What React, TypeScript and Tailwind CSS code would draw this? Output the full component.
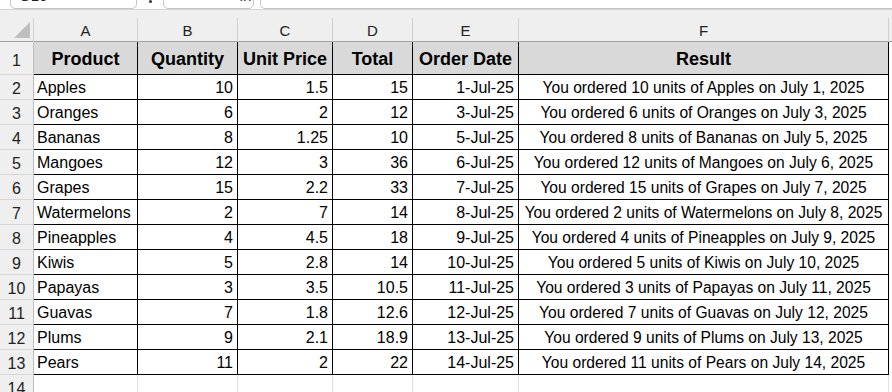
import React from "react";

type Row = {
  product: string;
  qty: number;
  price: string;
  total: string;
  date: string;
  result: string;
};

const rows: Row[] = [
  { product: "Apples", qty: 10, price: "1.5", total: "15", date: "1-Jul-25", result: "You ordered 10 units of Apples on July 1, 2025" },
  { product: "Oranges", qty: 6, price: "2", total: "12", date: "3-Jul-25", result: "You ordered 6 units of Oranges on July 3, 2025" },
  { product: "Bananas", qty: 8, price: "1.25", total: "10", date: "5-Jul-25", result: "You ordered 8 units of Bananas on July 5, 2025" },
  { product: "Mangoes", qty: 12, price: "3", total: "36", date: "6-Jul-25", result: "You ordered 12 units of Mangoes on July 6, 2025" },
  { product: "Grapes", qty: 15, price: "2.2", total: "33", date: "7-Jul-25", result: "You ordered 15 units of Grapes on July 7, 2025" },
  { product: "Watermelons", qty: 2, price: "7", total: "14", date: "8-Jul-25", result: "You ordered 2 units of Watermelons on July 8, 2025" },
  { product: "Pineapples", qty: 4, price: "4.5", total: "18", date: "9-Jul-25", result: "You ordered 4 units of Pineapples on July 9, 2025" },
  { product: "Kiwis", qty: 5, price: "2.8", total: "14", date: "10-Jul-25", result: "You ordered 5 units of Kiwis on July 10, 2025" },
  { product: "Papayas", qty: 3, price: "3.5", total: "10.5", date: "11-Jul-25", result: "You ordered 3 units of Papayas on July 11, 2025" },
  { product: "Guavas", qty: 7, price: "1.8", total: "12.6", date: "12-Jul-25", result: "You ordered 7 units of Guavas on July 12, 2025" },
  { product: "Plums", qty: 9, price: "2.1", total: "18.9", date: "13-Jul-25", result: "You ordered 9 units of Plums on July 13, 2025" },
  { product: "Pears", qty: 11, price: "2", total: "22", date: "14-Jul-25", result: "You ordered 11 units of Pears on July 14, 2025" },
];

const cols = "grid grid-cols-[34px_104px_100px_95px_80px_106px_370px_1fr]";
const letters = ["A", "B", "C", "D", "E", "F"];
const headers = ["Product", "Quantity", "Unit Price", "Total", "Order Date", "Result"];

const cell = "h-[25px] border-r border-b border-black flex items-end pb-[2px] leading-[18px] text-black whitespace-nowrap overflow-hidden";
const num = `${cell} text-[16px] justify-end pr-[4px]`;
const rowHead = "h-[25px] bg-[#efefef] border-r border-b border-r-[#bdbdbd] border-b-[#d6d6d6] flex items-end justify-center pb-[1px] leading-[18px] text-[16px] text-[#222]";

const FormulaBar = () => (
  <div className="h-[10px] bg-white border-b border-[#d4d4d4] overflow-hidden">
    <div className="flex items-start -mt-[20px] h-[29px]">
      <div className="ml-[10px] w-[127px] h-[29px] border border-[#c6c6c6] rounded-[5px] flex items-end pb-[5px] pl-[8px] leading-[15px] text-[15px] text-[#222]">
        G16
      </div>
      <div className="w-[26px] h-[29px] flex items-end justify-center pb-[6px]">
        <span className="w-[3px] h-[3px] rounded-full bg-[#333]" />
      </div>
      <div className="w-[91px] h-[29px] border border-[#c6c6c6] rounded-[5px] flex items-end pb-[5px] pl-[8px] gap-[16px] leading-[15px] text-[15px] text-[#aaa]">
        <span>✕</span>
        <span>✓</span>
        <span className="italic text-[#333] ml-[10px]">fx</span>
      </div>
      <div className="ml-[6px] flex-1 h-[29px] border border-[#c6c6c6] rounded-l-[5px] border-r-0" />
    </div>
  </div>
);

export default function App() {
  return (
    <div className="w-[892px] h-[392px] overflow-hidden bg-white font-['Liberation_Sans',Arial,sans-serif]">
      <FormulaBar />
      <div className="h-[8px] bg-[#efefef]" />
      <div className={`${cols} h-[24px] bg-[#efefef] border-b border-[#a0a0a0]`}>
        <div className="border-r border-[#d0d0d0] relative">
          <svg className="absolute left-[14px] top-[4px]" width="17" height="16" viewBox="0 0 17 16">
            <polygon points="16,0 16,16 0,16" fill="#bfbfbf" />
          </svg>
        </div>
        {letters.map((l) => (
          <div key={l} className="border-r border-[#d0d0d0] flex items-center justify-center text-[15px] text-[#222] pt-[2px]">
            {l}
          </div>
        ))}
        <div />
      </div>
      <div className={`${cols} h-[33px]`}>
        <div className="bg-[#efefef] border-r border-b border-r-[#bdbdbd] border-b-[#d6d6d6] flex items-end justify-center pb-[4px] text-[16px] leading-[18px] text-[#222]">
          1
        </div>
        {headers.map((h) => (
          <div
            key={h}
            className="bg-[#d9d9d9] border-r border-b border-black flex items-center justify-center font-bold text-[18px] leading-[20px] text-black whitespace-nowrap pt-[1px]"
          >
            {h}
          </div>
        ))}
        <div className="bg-white" />
      </div>
      {rows.map((r, i) => (
        <div key={r.product} className={cols}>
          <div className={rowHead}>{i + 2}</div>
          <div className={`${cell} text-[16px] pl-[3px]`}>{r.product}</div>
          <div className={num}>{r.qty}</div>
          <div className={num}>{r.price}</div>
          <div className={num}>{r.total}</div>
          <div className={num}>{r.date}</div>
          <div className={`${cell} text-[15.6px] justify-center`}>{r.result}</div>
          <div />
        </div>
      ))}
      <div className={cols}>
        <div className={rowHead}>14</div>
        {letters.map((l) => (
          <div key={l} className="h-[25px] border-r border-b border-[#e1e1e1]" />
        ))}
        <div />
      </div>
    </div>
  );
}
